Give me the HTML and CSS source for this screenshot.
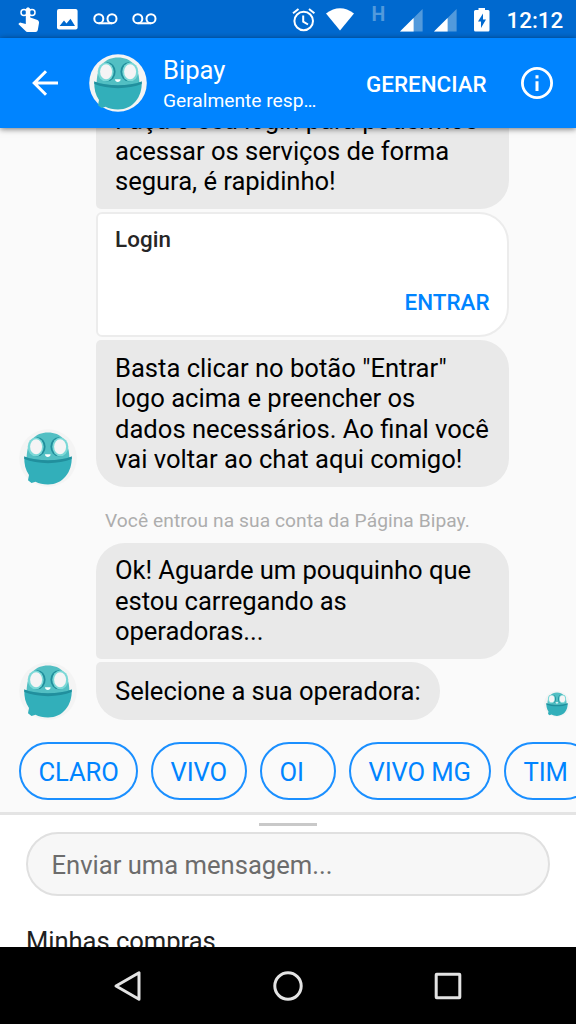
FILE: index.html
```html
<!DOCTYPE html>
<html lang="pt-BR">
<head>
<meta charset="utf-8">
<title>Bipay</title>
<link rel="stylesheet" href="styles.css">
</head>
<body>
<svg class="defs" width="0" height="0">
  <symbol id="bipay" viewBox="0 0 58 58">
    <circle cx="29" cy="29" r="28.800" fill="#f4f4f4"/>
    <path d="M7.600 30C7.600 12 16 3.500 29 3.500S50.400 12 50.400 30L46 35H12Z" fill="#52bfc3"/>
    <ellipse cx="18.600" cy="17.800" rx="8" ry="9.500" fill="#208f9c"/>
    <ellipse cx="39.400" cy="17.800" rx="8" ry="9.500" fill="#208f9c"/>
    <ellipse cx="16.700" cy="17.800" rx="8" ry="9.300" fill="#7bd8d7"/>
    <ellipse cx="41.300" cy="17.800" rx="8" ry="9.300" fill="#7bd8d7"/>
    <ellipse cx="17.100" cy="17.800" rx="6" ry="7.500" fill="#f5f4f5"/>
    <ellipse cx="41.100" cy="17.800" rx="6" ry="7.500" fill="#f5f4f5"/>
    <path d="M26 25.300h5.600c0 3.600-5.600 3.600-5.600 0Z" fill="#fff"/>
    <path d="M5.300 27.500C18 33 40 33 52.700 27.500C53.500 43 44 55.500 29 55.500C24 55.500 20 54.500 16.500 52.700L12.500 54L9 51.300L10 46C6.500 41 5 35 5.300 27.500Z" fill="#32afba"/>
    <path d="M5.300 27.500C18 32.500 40 32.500 52.700 27.500V30C40 35.500 18 35.500 5.300 30Z" fill="#218f9d"/>
  </symbol>
</svg>
<div class="screen">
  <div class="status">
    <svg class="i-touch" width="22" height="26" viewBox="0 0 22 26" fill="#fff">
      <circle cx="6" cy="5.500" r="3" fill="none" stroke="#fff" stroke-width="1.500"/>
      <circle cx="14" cy="5.500" r="3" fill="none" stroke="#fff" stroke-width="1.500"/>
      <path d="M7.800 2Q10 -1.500 12.300 2V10.500L19.500 13Q21.200 13.800 21 16L19.800 23Q19.500 25 17.500 25H9.500Q8.300 25 7.300 23.800L0.300 17L2 15.500L7.800 17Z"/>
    </svg>
    <svg class="i-photo" width="21" height="21" viewBox="0 0 21 21">
      <rect width="20.600" height="20.600" rx="2" fill="#fff"/>
      <path d="M2.600 17L7 11.500L9.500 14.500L13.500 9.800L18 17Z" fill="#0069cf"/>
    </svg>
    <svg class="i-voice" width="25" height="12" viewBox="0 0 25 12" fill="none" stroke="#fff" stroke-width="2">
      <circle cx="5.800" cy="5.700" r="4.500"/><circle cx="19" cy="5.700" r="4.500"/><path d="M5.800 10.300H19"/>
    </svg>
    <svg class="i-voice2" width="25" height="12" viewBox="0 0 25 12" fill="none" stroke="#fff" stroke-width="2">
      <circle cx="5.800" cy="5.700" r="4.500"/><circle cx="19" cy="5.700" r="4.500"/><path d="M5.800 10.300H19"/>
    </svg>
    <svg class="i-alarm" width="24" height="24" viewBox="0 0 24 24" fill="none" stroke="#fff" stroke-width="2">
      <circle cx="11.700" cy="13" r="9.300"/><path d="M1 5.300L6.500 1M22.400 5.300L17 1M11.200 7.500V13.700L16 16.500"/>
    </svg>
    <svg class="i-wifi" width="28" height="23" viewBox="0 0 28 23"><path d="M0 5.500Q14 -5 28 5.500L14 22.500Z" fill="#fff"/></svg>
    <span class="net">H</span>
    <svg class="i-sig" width="23" height="23" viewBox="0 0 23 23"><path d="M0 22.600L22.600 0V22.600Z" fill="#529adc"/><path d="M0 22.600L13.600 9V22.600Z" fill="#fff"/></svg>
    <svg class="i-sig2" width="23" height="23" viewBox="0 0 23 23"><path d="M0 22.600L22.600 0V22.600Z" fill="#529adc"/><path d="M0 22.600L13.600 9V22.600Z" fill="#fff"/></svg>
    <svg class="i-batt" width="16" height="24" viewBox="0 0 16 24"><path d="M4.500 0H11V2H14.200Q15.500 2 15.500 3.500V22Q15.500 23.500 14.200 23.500H1.500Q0 23.500 0 22V3.500Q0 2 1.500 2H4.500Z" fill="#fff"/><path d="M9 5.500L4 13.500H7V20L12 11.500H9Z" fill="#0069cf"/></svg>
    <span class="clock">12:12</span>
  </div>
  <header class="header">
    <svg class="back" width="27" height="26" viewBox="0 0 27 26" fill="none" stroke="#fff" stroke-width="3"><path d="M26 13H2.500M14 1.200L2.200 13L14 24.800"/></svg>
    <svg class="head-av" width="58" height="58"><use href="#bipay"/></svg>
    <div class="who"><div class="name">Bipay</div><div class="sub">Geralmente resp…</div></div>
    <div class="manage">GERENCIAR</div>
    <svg class="info" width="32" height="32" viewBox="0 0 32 32"><circle cx="16" cy="16" r="14.600" fill="none" stroke="#fff" stroke-width="2.800"/><path d="M14.500 8.300h3v3.200h-3zM14.500 14.300h3v9.700h-3z" fill="#fff"/></svg>
  </header>
  <main class="chat">
    <div class="bubble first">Faça o seu login para podermos<br>acessar os serviços de forma<br>segura, é rapidinho!</div>
    <div class="card"><div class="card-title">Login</div><div class="card-action">ENTRAR</div></div>
    <div class="row">
      <svg class="avatar" width="58" height="58"><use href="#bipay"/></svg>
      <div class="bubble last four">Basta clicar no botão "Entrar"<br>logo acima e preencher os<br>dados necessários. Ao final você<br>vai voltar ao chat aqui comigo!</div>
    </div>
    <div class="notice">Você entrou na sua conta da Página Bipay.</div>
    <div class="bubble start">Ok! Aguarde um pouquinho que<br>estou carregando as<br>operadoras...</div>
    <div class="row row-end">
      <svg class="avatar" width="58" height="58"><use href="#bipay"/></svg>
      <div class="bubble last one">Selecione a sua operadora:</div>
      <svg class="seen" width="26" height="26"><use href="#bipay"/></svg>
    </div>
    <div class="chips">
      <div class="chip claro">CLARO</div><div class="chip vivo">VIVO</div><div class="chip oi">OI</div><div class="chip mg">VIVO MG</div><div class="chip tim">TIM</div>
    </div>
  </main>
  <section class="composer">
    <div class="handle"></div>
    <div class="input">Enviar uma mensagem...</div>
    <div class="menu">Minhas compras</div>
  </section>
  <nav class="nav">
    <svg width="32" height="32" viewBox="0 0 32 32"><path d="M4 16L27 2.700V29.300Z"/></svg>
    <svg width="32" height="32" viewBox="0 0 32 32"><circle cx="16" cy="16" r="13.200"/></svg>
    <svg width="32" height="32" viewBox="0 0 32 32"><rect x="4.200" y="4.200" width="23.600" height="23.600" rx="0.500"/></svg>
  </nav>
</div>
</body>
</html>
```
FILE: styles.css
```css
* { box-sizing: border-box; }
body { margin: 0; font-family: Roboto, sans-serif; }
svg { display: block; flex: none; }
.defs { position: absolute; }
.screen { width: 576px; height: 1024px; display: flex; flex-direction: column; overflow: hidden; background: #fafafa; }
.status { height: 38px; flex: none; background: #0069cf; display: flex; align-items: flex-start; color: #fff; }
.i-touch { margin: 7px 0 0 18px; }
.i-photo { margin: 9px 0 0 17px; }
.i-voice { margin: 12.500px 0 0 15px; }
.i-voice2 { margin: 12.500px 0 0 13.500px; }
.i-alarm { margin: 7.500px 0 0 auto; }
.i-wifi { margin: 7.500px 0 0 10px; }
.net { margin: 3px 0 0 17.500px; width: 14px; font-size: 19.500px; line-height: 24px; font-weight: 700; color: #529adc; }
.i-sig { margin: 9px 0 0 14.500px; }
.i-sig2 { margin: 9px 0 0 10.500px; }
.i-batt { margin: 7.500px 0 0 17.500px; }
.clock { margin: 6px 12.500px 0 16.500px; width: 57px; white-space: nowrap; font-size: 22.400px; line-height: 28px; font-weight: 500; }
.header { height: 90px; flex: none; background: #0084ff; color: #fff; display: flex; align-items: center; position: relative; box-shadow: 0 1px 6px rgba(0,0,0,.55); }
.back { margin-left: 32px; }
.head-av { margin-left: 30px; }
.who { margin-left: 16px; width: 160px; white-space: nowrap; padding-top: 1px; }
.name { font-size: 25.600px; line-height: 30px; }
.sub { font-size: 19.200px; line-height: 24px; margin-top: 4px; }
.manage { margin: 1px 0 0 43px; width: 122px; font-size: 22.400px; font-weight: 500; }
.info { margin-left: 33px; }
.chat { height: 683.500px; flex: none; overflow: hidden; display: flex; flex-direction: column; justify-content: flex-end; padding-bottom: 11.500px; }
.bubble { margin-left: 96px; width: 412.500px; flex: none; background: #e9e9e9; color: #000; border-radius: 5px 28.800px 28.800px 5px; padding: 13px 0 0 19px; font-size: 25.600px; line-height: 30.400px; letter-spacing: -.04px; white-space: nowrap; }
.first { height: 116.500px; padding-top: 13.300px; }
.card { margin: 3px 0 3.500px 96px; width: 412.500px; height: 125px; flex: none; background: #fff; border: 2px solid #ececec; border-radius: 6px 30px 30px 6px; padding: 12.500px 17px 16px 17px; display: flex; flex-direction: column; justify-content: space-between; line-height: 26px; font-size: 22.400px; font-weight: 500; }
.card-title { color: #262626; letter-spacing: .1px; }
.card-action { color: #0084ff; align-self: flex-end; padding-bottom: 4px; }
.row { display: flex; align-items: flex-end; flex: none; }
.avatar { margin-left: 19px; }
.row .bubble { margin-left: 19px; }
.last { border-radius: 5px 28.800px 28.800px 28.800px; }
.row .four { height: 147px; letter-spacing: 0; }
.notice { height: 55.500px; flex: none; margin-left: 105px; padding-top: 20.500px; font-size: 19.200px; line-height: 26px; color: #adadad; letter-spacing: .06px; }
.start { height: 116.500px; border-radius: 28.800px 28.800px 28.800px 5px; margin-bottom: 3px; padding-top: 12.800px; letter-spacing: -.06px; }
.row .one { width: 344px; height: 58px; padding-top: 13.800px; }
.seen { margin: 0 6.500px 3px auto; }
.chips { display: flex; gap: 13px; margin: 22px 0 0 19px; flex: none; }
.chip { flex: none; height: 58px; border: 2px solid #1a8fff; border-radius: 29px; padding-left: 17.500px; color: #0084ff; font-size: 25.600px; line-height: 56px; letter-spacing: -.1px; }
.claro { width: 119px; }
.vivo { width: 96px; }
.oi { width: 76px; }
.mg { width: 142px; }
.tim { width: 90px; }
.composer { height: 135.500px; flex: none; background: #fff; border-top: 3px solid #e4e4e4; overflow: hidden; display: flex; flex-direction: column; }
.handle { width: 58px; height: 3px; background: #c9c9c9; margin: 8px auto 0 259px; flex: none; }
.input { margin: 6px 0 0 25.500px; width: 524.500px; height: 64px; flex: none; background: #f7f7f7; border: 2px solid #e0e0e0; border-radius: 32px; padding-left: 24px; font-size: 25.600px; line-height: 62px; color: #6c6c6c; }
.menu { margin: 30px 0 0 26px; font-size: 25.600px; line-height: 30px; color: #202020; letter-spacing: -.05px; }
.nav { height: 77px; flex: none; background: #000; display: flex; justify-content: space-between; align-items: center; padding: 0 112px; }
.nav svg { fill: none; stroke: #e3e3e3; stroke-width: 3; stroke-linejoin: round; }
```
